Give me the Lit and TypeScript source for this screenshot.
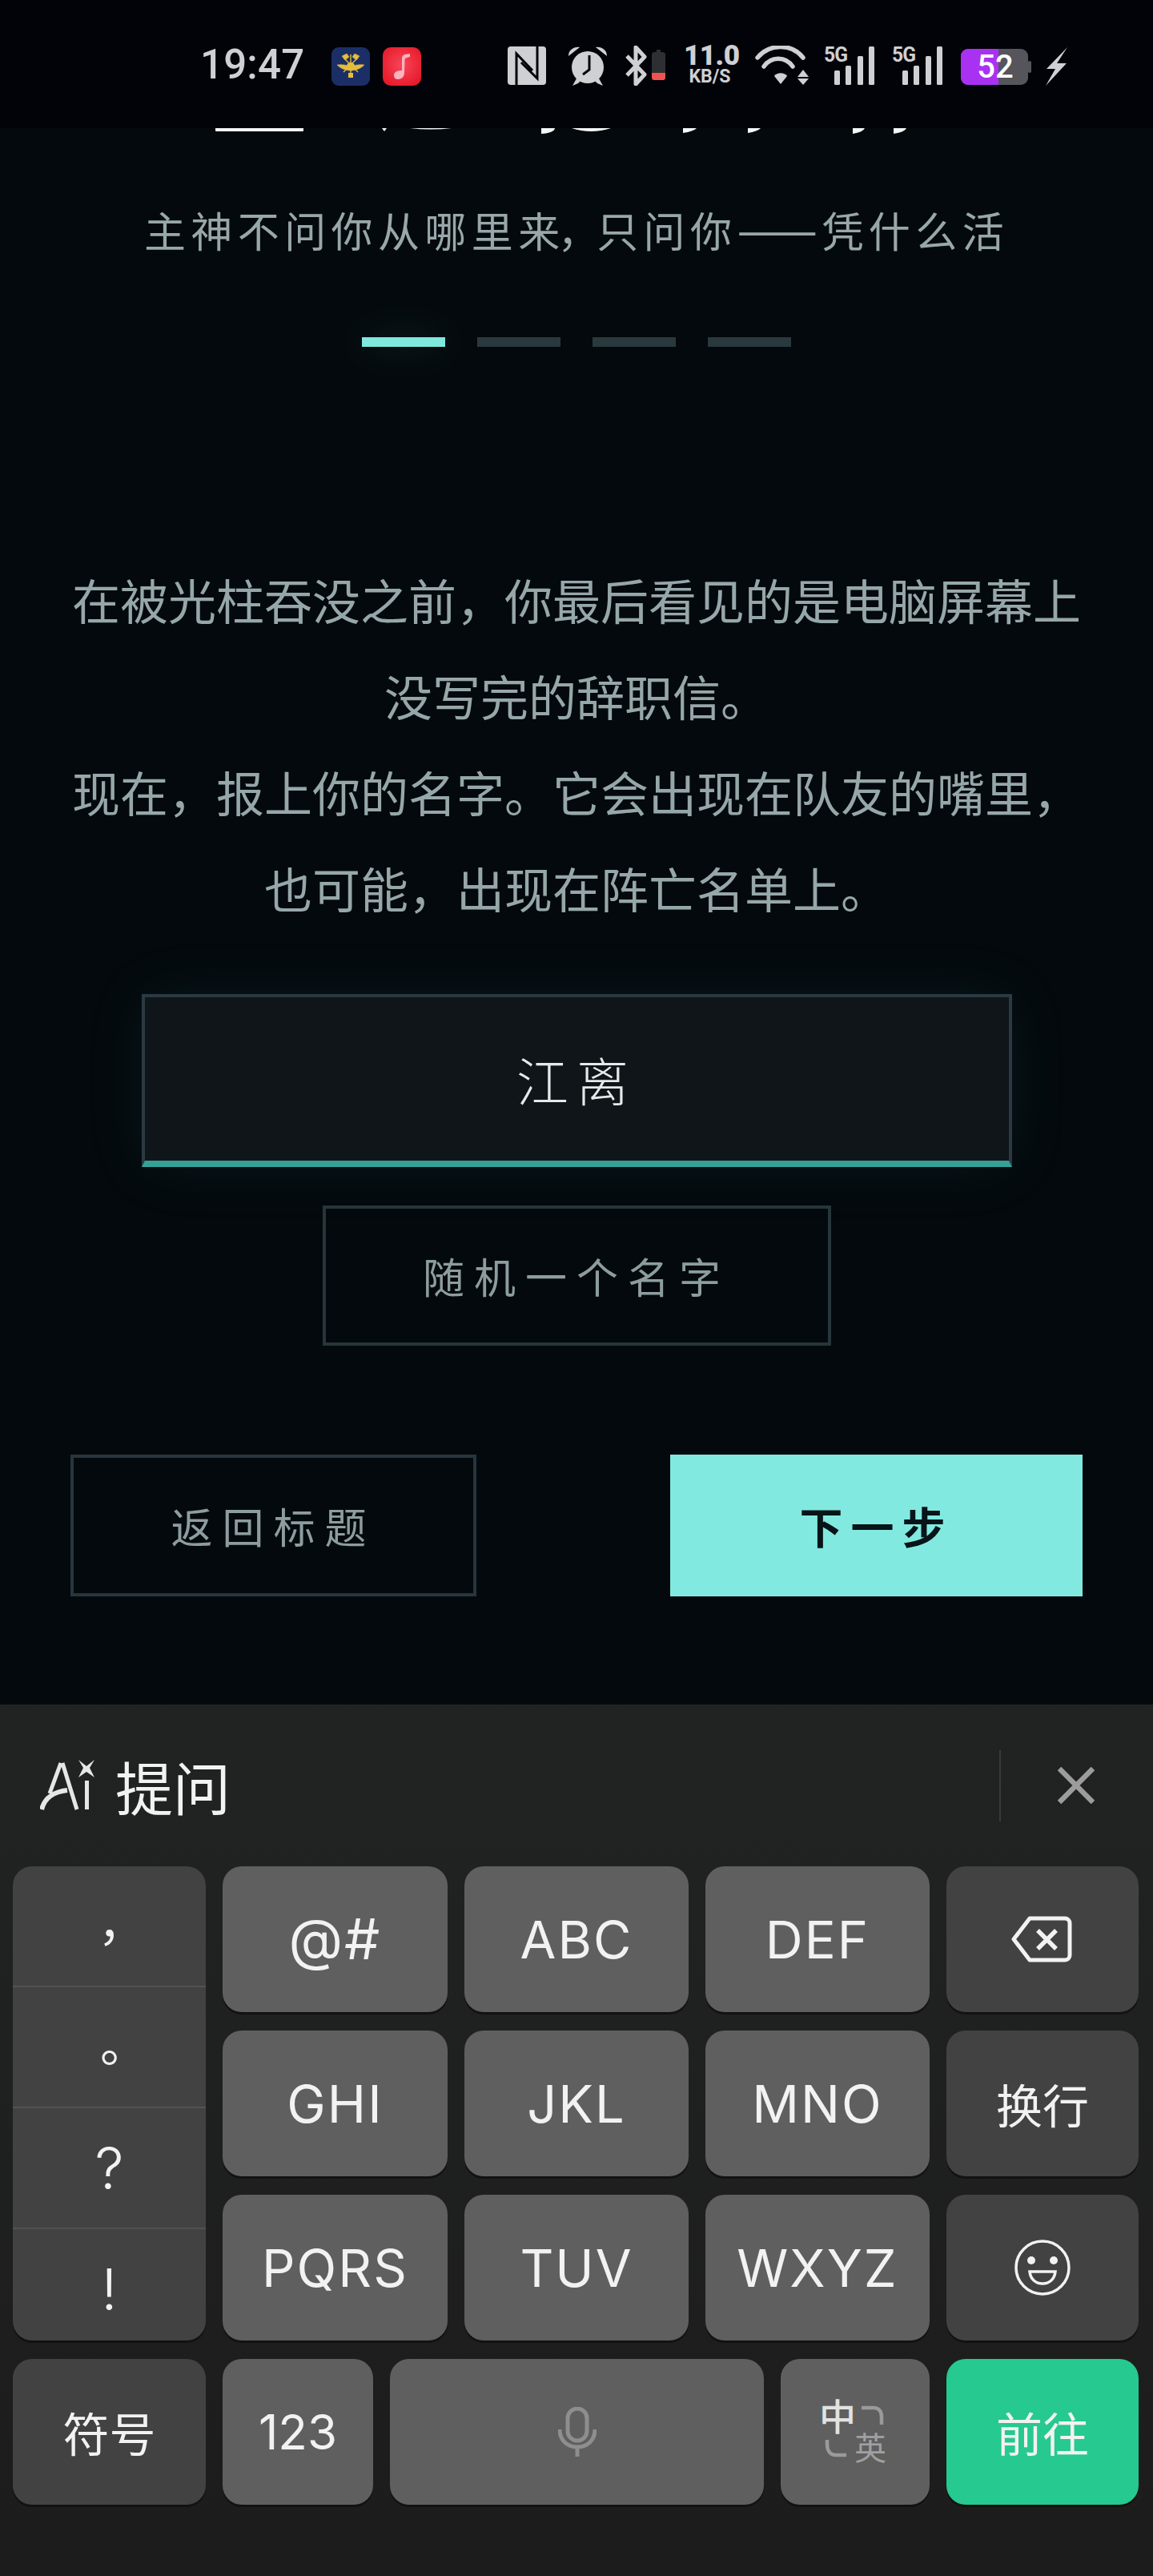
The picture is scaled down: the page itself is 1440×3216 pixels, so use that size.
import { LitElement, html, css, svg } from 'lit';
import { customElement } from 'lit/decorators.js';

const CJK = css`"Noto Sans CJK SC", "Noto Sans", sans-serif`;

@customElement('status-bar')
class StatusBar extends LitElement {
  static styles = css`
    :host {
      display: block;
      height: 160px;
      background: #020308;
      color: #cfd0d4;
    }
    .row {
      display: flex;
      align-items: flex-start;
      height: 160px;
      padding-left: 250px;
      box-sizing: border-box;
    }
    .time {
      font: 500 51px/52px Roboto, sans-serif;
      margin-top: 55px;
      width: 164px;
      letter-spacing: 0.2px;
    }
    svg {
      display: block;
      flex: none;
    }
    .speed {
      width: 65px;
      margin: 54px 0 0 23px;
      text-align: center;
      font-family: Roboto, sans-serif;
      font-weight: 700;
    }
    .speed b {
      display: block;
      font-size: 35px;
      line-height: 32px;
      letter-spacing: -0.5px;
    }
    .speed span {
      display: block;
      font-size: 23px;
      line-height: 20px;
    }
    .net {
      position: relative;
      width: 63px;
      height: 50px;
      margin-top: 57px;
    }
    .net span {
      position: absolute;
      left: 0;
      top: 0;
      font: 700 26px/22px Roboto, sans-serif;
      letter-spacing: -1px;
      transform: scaleX(0.95);
      transform-origin: left;
    }
    .net svg {
      position: absolute;
      left: 0;
      top: 1px;
    }
    .battery {
      position: relative;
      width: 88px;
      height: 46px;
      margin: 61px 0 0 23px;
    }
    .battery em {
      position: absolute;
      inset: 0;
      font: 500 40px/46px Roboto, sans-serif;
      color: #fff;
      text-align: center;
      padding-right: 2px;
    }
    .m-blue { margin-top: 59px; }
    .m-red { margin: 59px 0 0 16px; }
    .m-nfc { margin: 58px 0 0 108px; }
    .m-alarm { margin: 57px 0 0 27px; }
    .m-bt { margin: 57px 0 0 22px; }
    .m-wifi { margin: 57px 0 0 24px; }
    .m-net1 { margin-left: 19px; }
    .m-net2 { margin-left: 22px; }
    .m-bolt { margin: 59px 0 0 18px; }
  `;

  private bars() {
    return html`<svg width="63" height="48" viewBox="0 0 63 48" fill="#cfd0d4">
      <rect x="13" y="30" width="7" height="18" rx="1.5"></rect>
      <rect x="27" y="24" width="7" height="24" rx="1.5"></rect>
      <rect x="42" y="12" width="7" height="36" rx="1.5"></rect>
      <rect x="56" y="0" width="7" height="48" rx="1.5"></rect>
    </svg>`;
  }

  render() {
    return html`<div class="row">
      <div class="time">19:47</div>

      <svg class="m-blue" width="48" height="48" viewBox="0 0 48 48">
        <rect width="48" height="48" rx="9" fill="#1b2f66"></rect>
        <g fill="#e5bd3c" stroke="#e5bd3c">
          <path d="M7 22 C14 21 19 22 24 25 C29 22 34 21 41 22 C36 27 30 29 24 29 C18 29 12 27 7 22Z" stroke-width="0.5"></path>
          <circle cx="24" cy="24" r="5" stroke-width="0.5"></circle>
          <path d="M24 9V38M15 13L33 31M33 13L15 31" fill="none" stroke-width="1.4"></path>
          <path d="M13 11l6-3 3 4-5 4zM35 11l-6-3-3 4 5 4z" stroke-width="0.5"></path>
          <rect x="21" y="32" width="6" height="6" stroke-width="0"></rect>
        </g>
      </svg>
      <svg class="m-red" width="48" height="48" viewBox="0 0 48 48">
        <defs>
          <radialGradient id="mus" cx="50%" cy="45%" r="60%">
            <stop offset="0" stop-color="#f8465a"></stop>
            <stop offset="1" stop-color="#e61b2b"></stop>
          </radialGradient>
        </defs>
        <rect width="48" height="48" rx="10" fill="url(#mus)"></rect>
        <path d="M24 13 C25 9 29 9 34 8 L34 12 C30 13 28 13 27.5 15 L27 32 C27 37 23 40 19 40 C15 40 14 37 14 35 C14 31 18 29 24 29Z" fill="#f8b5bd"></path>
      </svg>

      <svg class="m-nfc" width="48" height="48" viewBox="0 0 48 48">
        <rect width="48" height="48" rx="4" fill="#cfd0d4"></rect>
        <path d="M11 48V9L31 30M37 0V40L17 20" fill="none" stroke="#020308" stroke-width="3"></path>
      </svg>
      <svg class="m-alarm" width="50" height="50" viewBox="0 0 50 50">
        <circle cx="25" cy="27" r="20" fill="#cfd0d4"></circle>
        <path d="M1 13C1 5 8 1 15 2Z M49 13C49 5 42 1 35 2Z" fill="#cfd0d4"></path>
        <path d="M11 41L6 50L13 47L16 44Z M39 41L44 50L37 47L34 44Z" fill="#cfd0d4"></path>
        <path d="M27 12V30L19 36" fill="none" stroke="#020308" stroke-width="3"></path>
      </svg>
      <svg class="m-bt" width="50" height="50" viewBox="0 0 50 50">
        <path d="M2 13L24 36L13 48V2L24 14L2 37" fill="none" stroke="#cfd0d4" stroke-width="5" stroke-linejoin="round"></path>
        <rect x="33" y="8" width="17" height="35" rx="3.5" fill="#2e2f33"></rect>
        <rect x="39" y="5" width="5" height="4" fill="#2e2f33"></rect>
        <path d="M33 34H50V39.5a3.5 3.5 0 0 1-3.5 3.5H36.5a3.5 3.5 0 0 1-3.5-3.5Z" fill="#ef5350"></path>
      </svg>

      <div class="speed"><b>11.0</b><span>KB/S</span></div>

      <svg class="m-wifi" width="67" height="50" viewBox="0 0 67 50">
        <path d="M3 15C18 -3 46 -3 60 15M11 26C20 13 38 13 47 26" fill="none" stroke="#cfd0d4" stroke-width="5.5" stroke-linecap="round"></path>
        <path d="M24 38C27 33 37 33 40 38L32 48Z" fill="#cfd0d4"></path>
        <path d="M60 30L67 39H53Z M53 41H67L60 49Z" fill="#cfd0d4"></path>
      </svg>

      <div class="net m-net1"><span>5G</span>${this.bars()}</div>
      <div class="net m-net2"><span>5G</span>${this.bars()}</div>

      <div class="battery">
        <svg width="88" height="45" viewBox="0 0 88 45">
          <rect x="0" y="0" width="84" height="45" rx="9" fill="#55555b"></rect>
          <path d="M9 0H47V45H9a9 9 0 0 1-9-9V9a9 9 0 0 1 9-9Z" fill="#a931f2"></path>
          <rect x="84" y="15" width="4" height="15" rx="2" fill="#55555b"></rect>
        </svg>
        <em>52</em>
      </div>

      <svg class="m-bolt" width="27" height="48" viewBox="0 0 27 48">
        <path d="M27 0L1 27H12L0 48L26 20H14Z" fill="#cfd0d4"></path>
      </svg>
    </div>`;
  }
}

@customElement('app-root')
class AppRoot extends LitElement {
  static styles = css`
    :host {
      display: block;
      width: 1440px;
      height: 3216px;
      overflow: hidden;
      background: #04090d;
      font-family: ${CJK};
    }
    .game {
      height: 1968px;
      display: flex;
      flex-direction: column;
      align-items: center;
      position: relative;
    }
    .cut {
      position: absolute;
      left: 0;
      top: 0;
      display: block;
    }
    .sub {
      margin-top: 103px;
      width: 1440px;
      text-align: center;
      font-size: 52px;
      line-height: 48px;
      letter-spacing: 6.4px;
      color: #98a7a9;
    }
    .sub .comma {
      letter-spacing: -3px;
    }
    .sub .dash {
      font-size: 60px;
      line-height: 0;
      letter-spacing: 5.5px;
    }
    .steps {
      display: flex;
      gap: 40px;
      margin-top: 110px;
    }
    .steps i {
      display: block;
      width: 104px;
      height: 12px;
      background: #2a393e;
    }
    .steps i.on {
      background: #7fe8dd;
      box-shadow: 0 0 50px rgba(127, 232, 221, 0.2);
    }
    .story {
      margin: 255px 0 0;
      width: 1440px;
      text-align: center;
      font-size: 60px;
      line-height: 120px;
      color: #96a7aa;
    }
    .name {
      box-sizing: border-box;
      width: 1087px;
      height: 216px;
      margin-top: 73px;
      border: 4px solid #2b3a42;
      border-bottom: 8px solid #35a098;
      background: #0f1519;
      box-shadow: 0 0 80px rgba(60, 190, 175, 0.08);
      display: flex;
      align-items: center;
      justify-content: center;
      font-size: 65px;
      font-weight: 300;
      letter-spacing: 10px;
      color: #e4eaea;
    }
    .random {
      box-sizing: border-box;
      width: 635px;
      height: 175px;
      margin-top: 48px;
      border: 4px solid #26363a;
      display: flex;
      align-items: center;
      justify-content: center;
      font-size: 52px;
      letter-spacing: 12px;
      color: #8d9d9f;
    }
    .nav {
      width: 1264px;
      display: flex;
      justify-content: space-between;
      margin-top: 136px;
    }
    .nav div {
      box-sizing: border-box;
      height: 177px;
      display: flex;
      align-items: center;
      justify-content: center;
      font-size: 52px;
      letter-spacing: 12px;
    }
    .back {
      width: 507px;
      border: 4px solid #26363e;
      color: #8d9d9f;
    }
    .nav .next {
      width: 515px;
      background: #82e9e0;
      color: #071418;
      font-weight: 700;
      font-size: 54px;
      letter-spacing: 10px;
    }

    .kb {
      height: 1088px;
      background: linear-gradient(#212322, #1c1c1c);
    }
    .tools {
      height: 202px;
      display: flex;
      align-items: center;
      padding: 0 73px 0 50px;
      box-sizing: border-box;
    }
    .tools .ask {
      margin-left: 24px;
      font-size: 72px;
      line-height: 80px;
      color: #f2f2f2;
    }
    .tools .sep {
      width: 2px;
      height: 89px;
      margin-left: auto;
      background: #383a39;
    }
    .tools .close {
      margin-left: 71px;
    }
    .keys {
      display: grid;
      grid-template-columns: 241px 281px 280px 280px 240px;
      grid-template-rows: repeat(3, 182px);
      gap: 23px 21px;
      padding-left: 16px;
    }
    .key {
      border-radius: 24px;
      display: flex;
      align-items: center;
      justify-content: center;
      background: #5f5f5f;
      color: #f2f2f2;
      box-shadow: 0 3px 0 #121212;
      font: 400 65px/1 Inter, sans-serif;
      letter-spacing: 2px;
    }
    .key.sym {
      font-size: 70px;
    }
    .key.num {
      font-size: 60px;
      letter-spacing: 0;
    }
    .key.dark {
      background: #424242;
    }
    .key.cn {
      font: 400 58px/1 ${CJK};
      letter-spacing: 0;
    }
    .key.bksp svg {
      margin-right: 3px;
    }
    .punct {
      grid-row: 1 / span 3;
      background: #424242;
      border-radius: 24px;
      box-shadow: 0 3px 0 #121212;
      display: grid;
      grid-template-rows: 151px 151px 151px 1fr;
      overflow: hidden;
      color: #f2f2f2;
    }
    .punct span {
      display: flex;
      align-items: center;
      justify-content: center;
      border-bottom: 2px solid #525252;
      box-sizing: border-box;
    }
    .punct span:last-child {
      border-bottom: 0;
      padding-top: 10px;
    }
    .punct .zh {
      font: 400 60px/1 "Noto Sans CJK TC", sans-serif;
      padding-top: 20px;
    }
    .punct .en {
      font: 300 72px/1 Inter, sans-serif;
    }
    .last {
      display: grid;
      grid-template-columns: 241px 188px 467px 186px 240px;
      gap: 21px;
      height: 182px;
      margin-top: 23px;
      padding-left: 16px;
    }
    .go {
      background: #26c990;
    }
    .switch {
      position: relative;
    }
    .switch b {
      position: absolute;
      font-family: ${CJK};
      line-height: 1;
      letter-spacing: 0;
    }
    .switch .a {
      left: 48px;
      top: 46px;
      font-size: 46px;
      font-weight: 500;
      color: #e2e2e2;
    }
    .switch .b {
      left: 92px;
      top: 89px;
      font-size: 40px;
      font-weight: 400;
      color: #a0a0a0;
    }
    .switch svg {
      position: absolute;
      left: 54px;
      top: 56px;
    }
  `;

  private key(label: string, cls = '') {
    return html`<div class="key ${cls}">${label}</div>`;
  }

  // bottoms of the title, which scrolled under the status bar
  private cutGlyphs() {
    const bits = [
      'M269 0H379V3Q379 4 378 4H270Q269 4 269 3Z',
      'M477 0H483L480 4Z',
      'M512 0H564Q538 3 512 0Z',
      'M676 0H693Q692 6 676 7Z',
      'M714 0H763Q738 8 714 0Z',
      'M853 0H870Q866 4 853 6Z',
      'M934 0H950Q946 4 934 6Z',
      'M1065 0H1080Q1078 5 1065 7Z',
      'M1116 0H1132Q1130 5 1116 7Z',
    ];
    return svg`${bits.map(d => svg`<path d=${d} fill="#f4f8f8"></path>`)}`;
  }

  render() {
    return html`
      <status-bar></status-bar>
      <div class="game">
        <svg class="cut" width="1440" height="8">${this.cutGlyphs()}</svg>
        <div class="sub">主神不问你从哪里<span class="comma">来，</span>只问你<span class="dash">——</span>凭什么活</div>
        <div class="steps"><i class="on"></i><i></i><i></i><i></i></div>
        <p class="story">
          在被光柱吞没之前，你最后看见的是电脑屏幕上<br />没写完的辞职信。<br />现在，报上你的名字。它会出现在队友的嘴里，<br />也可能，出现在阵亡名单上。
        </p>
        <div class="name">江离</div>
        <div class="random">随机一个名字</div>
        <div class="nav">
          <div class="back">返回标题</div>
          <div class="next">下一步</div>
        </div>
      </div>

      <div class="kb">
        <div class="tools">
          <svg width="70" height="64" viewBox="0 0 70 64">
            <path d="M26 4L12 42M28 4L46 62" fill="none" stroke="#e6e6e6" stroke-width="5"></path>
            <path d="M2 62C6 46 18 40 34 38" fill="none" stroke="#e6e6e6" stroke-width="6"></path>
            <rect x="56" y="26" width="5" height="36" fill="#e6e6e6"></rect>
            <path d="M48 0L58 8L68 0L62 10L68 22L58 15L48 22L54 10Z" fill="#e6e6e6"></path>
          </svg>
          <div class="ask">提问</div>
          <div class="sep"></div>
          <svg class="close" width="46" height="46" viewBox="0 0 46 46">
            <path d="M2 2L44 44M44 2L2 44" stroke="#9c9c9c" stroke-width="6.5"></path>
          </svg>
        </div>

        <div class="keys">
          <div class="punct">
            <span class="zh">，</span><span class="zh">。</span>
            <span class="en">?</span><span class="en">!</span>
          </div>
          ${this.key('@#', 'sym')}${this.key('ABC')}${this.key('DEF')}
          <div class="key dark bksp">
            <svg width="76" height="58" viewBox="0 0 76 58">
              <path d="M23 3H67a6 6 0 0 1 6 6V49a6 6 0 0 1-6 6H23L3 29Z" fill="none" stroke="#f2f2f2" stroke-width="5" stroke-linejoin="round"></path>
              <path d="M33 18L56 41M56 18L33 41" stroke="#f2f2f2" stroke-width="5.5"></path>
            </svg>
          </div>
          ${this.key('GHI')}${this.key('JKL')}${this.key('MNO')}${this.key('换行', 'dark cn')}
          ${this.key('PQRS')}${this.key('TUV')}${this.key('WXYZ')}
          <div class="key dark">
            <svg width="70" height="70" viewBox="0 0 70 70">
              <circle cx="35" cy="35" r="33" fill="none" stroke="#f2f2f2" stroke-width="3.5"></circle>
              <circle cx="21" cy="26" r="5" fill="#f2f2f2"></circle>
              <circle cx="49" cy="26" r="5" fill="#f2f2f2"></circle>
              <path d="M19 40H51C50 50 43 55 35 55C27 55 20 50 19 40Z" fill="none" stroke="#f2f2f2" stroke-width="3.5"></path>
            </svg>
          </div>
        </div>

        <div class="last">
          ${this.key('符号', 'dark cn')}
          ${this.key('123', 'num')}
          <div class="key">
            <svg width="48" height="62" viewBox="0 0 48 62">
              <rect x="12" y="2" width="24" height="40" rx="12" fill="none" stroke="#8e8e8e" stroke-width="5"></rect>
              <path d="M2 28C2 42 12 50 24 50C36 50 46 42 46 28M24 50V62" fill="none" stroke="#8e8e8e" stroke-width="5"></path>
            </svg>
          </div>
          <div class="key switch">
            <b class="a">中</b><b class="b">英</b>
            <svg width="80" height="70" viewBox="0 0 80 70">
              <path d="M47 5H62C68 5 72 9 72 16V26M4 45V50C4 59 8 64 15 64H28" fill="none" stroke="#9a9a9a" stroke-width="4.5"></path>
            </svg>
          </div>
          <div class="key go cn">前往</div>
        </div>
      </div>
    `;
  }
}
